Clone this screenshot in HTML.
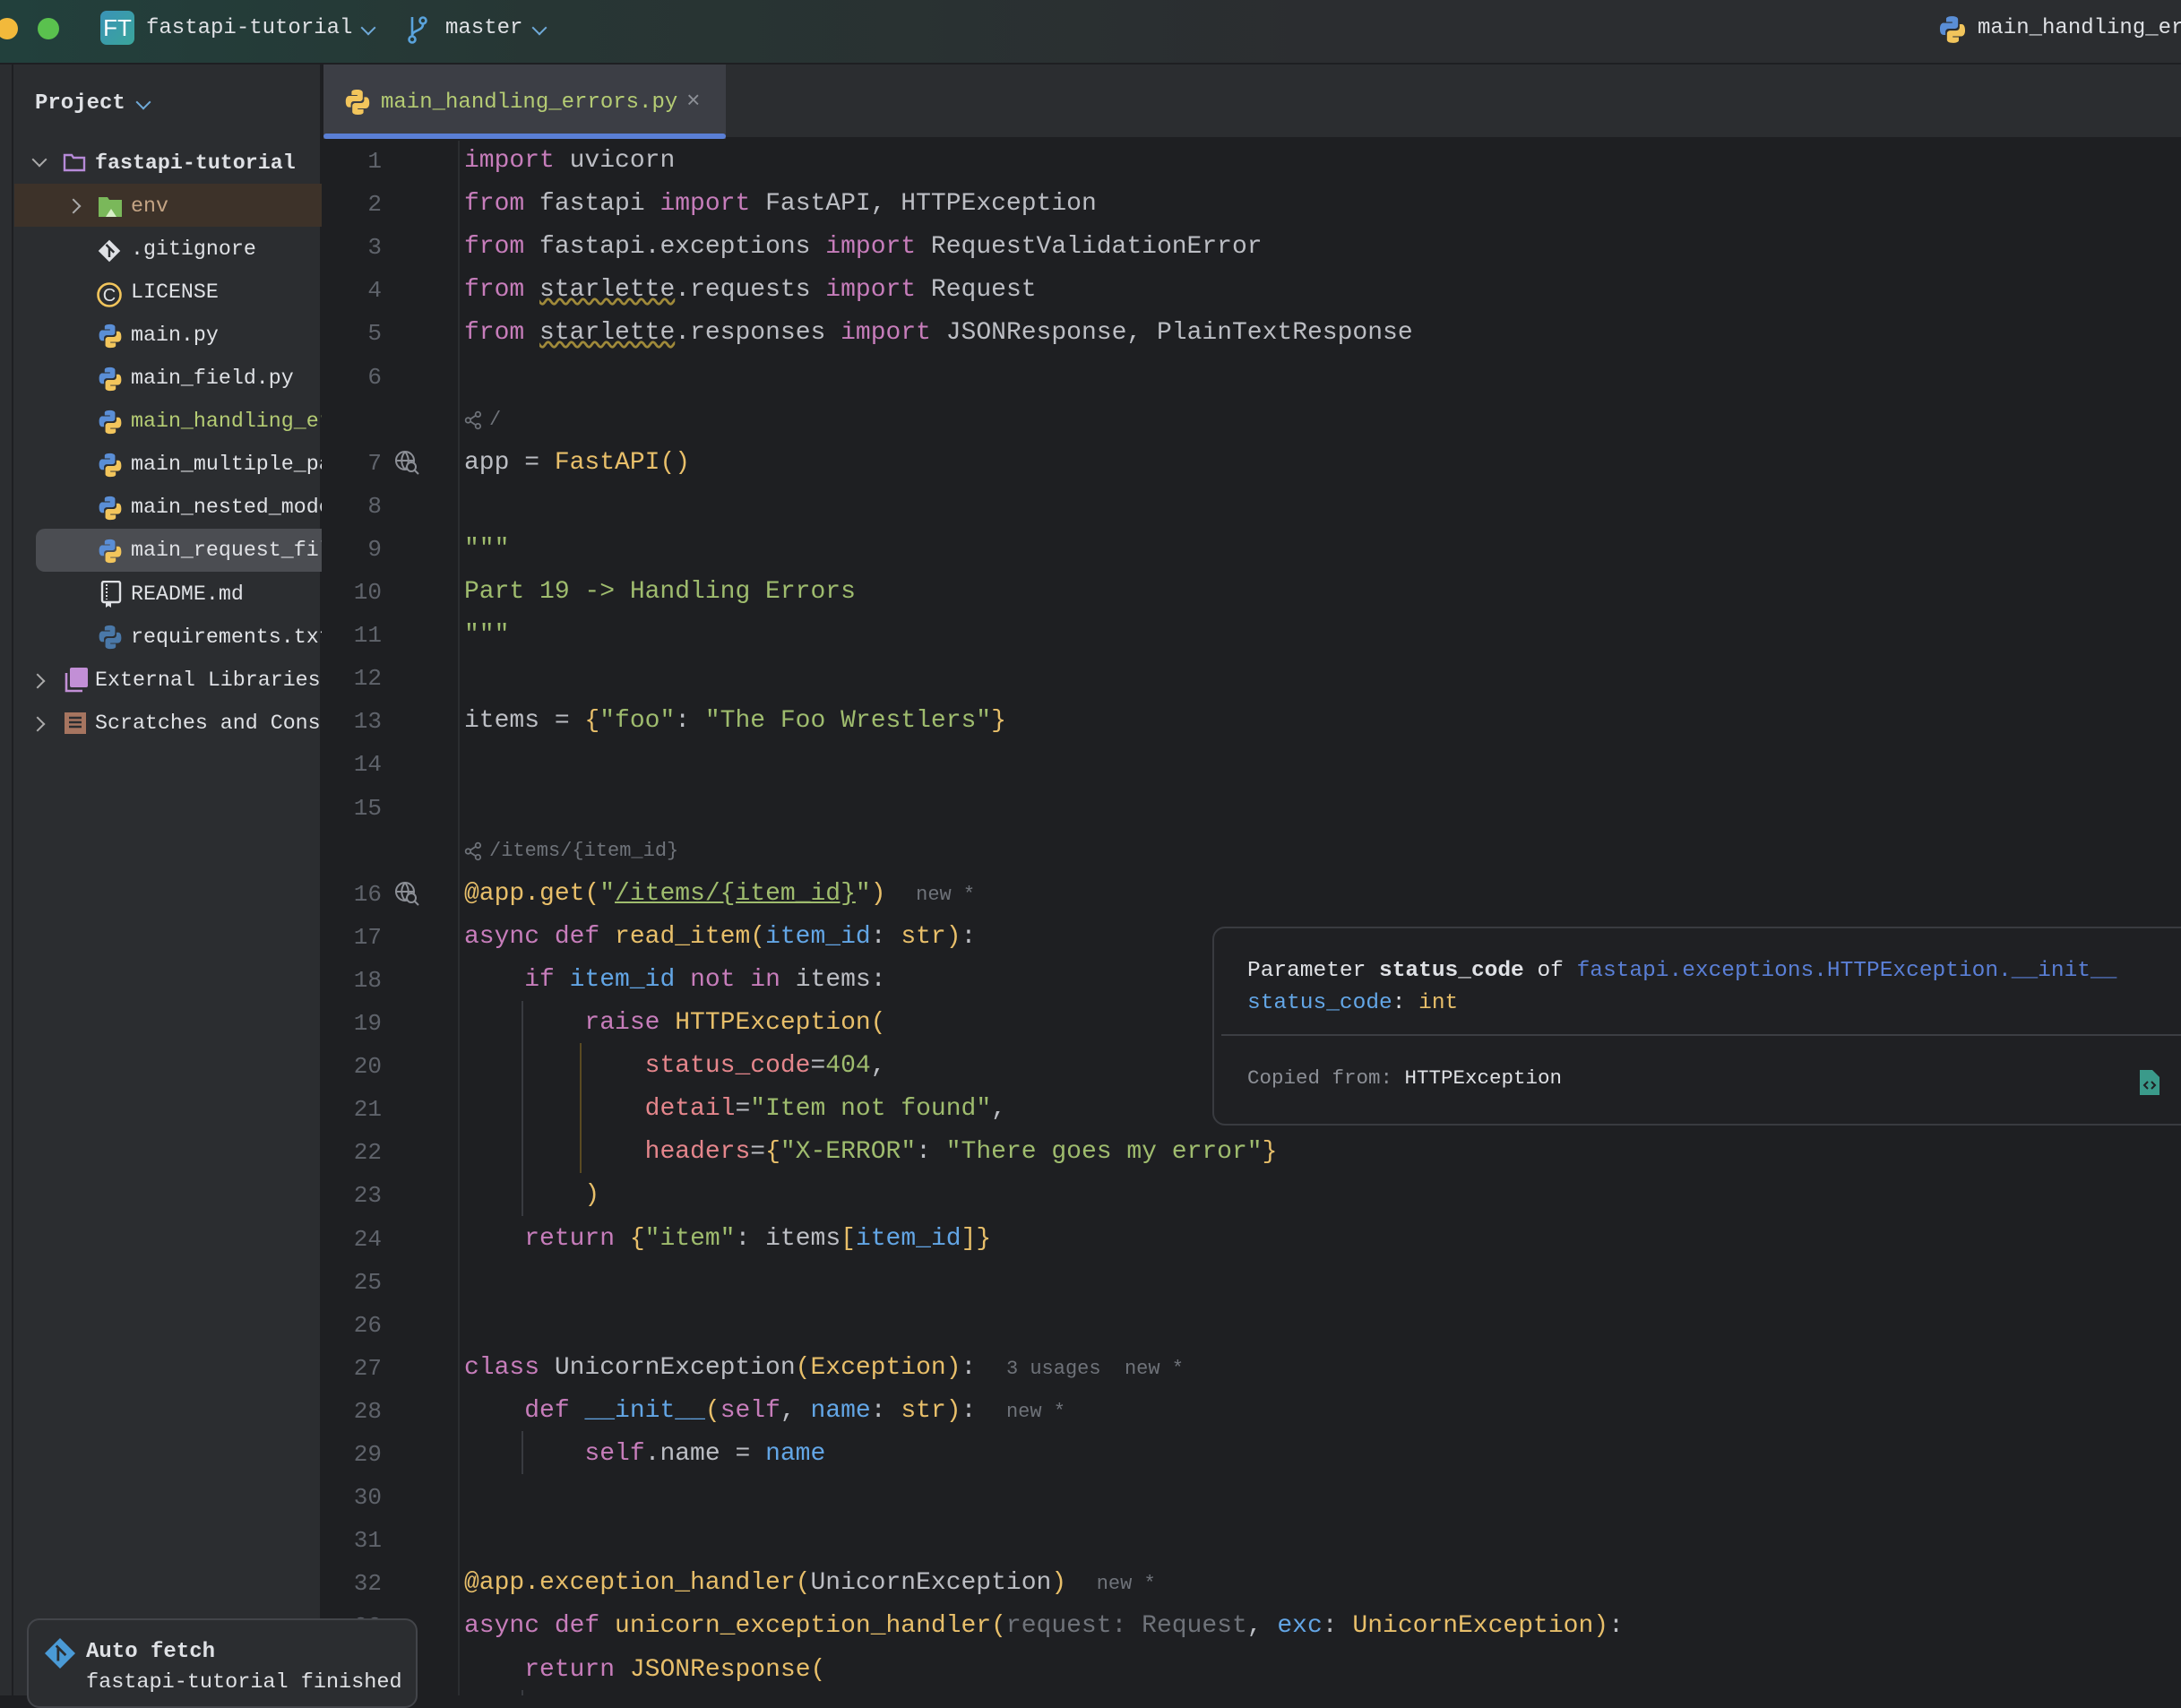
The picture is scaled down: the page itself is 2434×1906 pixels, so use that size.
<!DOCTYPE html>
<html><head><meta charset="utf-8"><style>
*{margin:0;padding:0;box-sizing:border-box}
body{width:2434px;height:1892px;background:#1e1f22;overflow:hidden;position:relative;font-family:"Liberation Mono",monospace;color:#bcbec4}
.abs{position:absolute}
#title{left:0;top:0;width:2434px;height:72px;background:linear-gradient(90deg,#22403c 0%,#273634 25%,#2b2d30 60%);border-bottom:2px solid #1e1f22}
#side{left:0;top:72px;width:359px;height:1820px;background:#2b2d30;border-right:2px solid #1e1f22}
#strip{left:0;top:72px;width:15px;height:1820px;background:#2b2d30;border-right:2px solid #1e1f22}
#tabbar{left:361px;top:72px;width:2073px;height:83px;background:#2b2d30;border-bottom:2px solid #1e1f22}
.row{position:absolute;height:48.1px;line-height:48.1px;white-space:pre}
.code{font-size:28px;left:518px}
.ln{font-size:26px;color:#5f636b;width:70px;text-align:right;left:356px}
.k{color:#c77dbb}.s{color:#9fbc6e}.f{color:#e8bf6a}.p{color:#63a6e6}.n{color:#e5868c}.g{color:#6f737a}.d{color:#bcbec4}
.sb{font-size:23.3px;line-height:48.1px;height:48.1px}
.chev{position:absolute;width:12px;height:12px;border-right:2.6px solid #aaa;border-bottom:2.6px solid #aaa}
</style></head><body>
<div id="title" class="abs">
  <div class="abs" style="left:-4px;top:20px;width:24px;height:24px;border-radius:50%;background:#f2b93b"></div>
  <div class="abs" style="left:42px;top:20px;width:24px;height:24px;border-radius:50%;background:#5ac14e"></div>
  <div class="abs" style="left:112px;top:12px;width:38px;height:38px;border-radius:7px;background:linear-gradient(135deg,#3a93b8,#3aa59a);color:#fff;font:26px 'Liberation Sans',sans-serif;line-height:38px;text-align:center">FT</div>
  <div class="abs" style="left:163px;top:18px;font-size:24px;color:#dfe1e5">fastapi-tutorial</div>
  <div class="chev" style="left:405px;top:25px;transform:rotate(45deg);border-color:#6fa9d8"></div>
  <svg class="abs" style="left:454px;top:16px" width="24" height="34" viewBox="0 0 24 34"><g fill="none" stroke="#5aa3dc" stroke-width="2.6"><circle cx="6" cy="28" r="3.5"/><circle cx="18" cy="7" r="3.5"/><path d="M6 3v21M18 11c0 8-12 6-12 13"/></g></svg>
  <div class="abs" style="left:497px;top:18px;font-size:24px;color:#dfe1e5">master</div>
  <div class="chev" style="left:596px;top:25px;transform:rotate(45deg);border-color:#6fa9d8"></div>
  <svg class="abs" style="left:2162px;top:16px" width="34" height="34" viewBox="0 0 16 16"><path d="M7.8 1C4.5 1 4.7 2.4 4.7 2.4V4h3.2v.5H3.5S1.4 4.3 1.4 7.6s1.8 3.2 1.8 3.2h1.1V9.3s-.1-1.8 1.8-1.8h3.1s1.7 0 1.7-1.7V2.8S11.2 1 7.8 1z" fill="#5a8ed6"/><path d="M8.2 15c3.3 0 3.1-1.4 3.1-1.4V12H8.1v-.5h4.4s2.1.2 2.1-3.1-1.8-3.2-1.8-3.2h-1.1v1.5s.1 1.8-1.8 1.8H6.8s-1.7 0-1.7 1.7v3S4.8 15 8.2 15z" fill="#f2c55c"/></svg>
  <div class="abs" style="left:2207px;top:18px;font-size:24px;color:#dfe1e5">main_handling_er</div>
</div>
<div id="side" class="abs"></div>
<div id="strip" class="abs"></div>
<div class="abs" style="left:39px;top:102px;font-size:24px;font-weight:bold;color:#dfe1e5">Project</div>
<div class="chev" style="left:154px;top:108px;transform:rotate(45deg);border-color:#6fa9d8"></div>
<div class="abs" style="left:16px;top:205px;width:343px;height:48px;background:#3d3229"></div>
<div class="abs" style="left:40px;top:590px;width:319px;height:48px;background:#4b4d52;border-radius:10px 0 0 10px"></div>
<div class="abs" style="left:0;top:157.5px;width:359px;overflow:hidden;height:680px">
 <div class="chev" style="left:38px;top:14px;transform:rotate(45deg)"></div>
 <svg class="abs" style="left:70px;top:12px" width="26" height="22" viewBox="0 0 26 22"><path d="M2 3h8l2 3h12v14H2z" fill="none" stroke="#b68ad8" stroke-width="2.4"/></svg>
 <div class="row sb" style="top:0;left:106px;color:#dfe1e5;font-weight:bold">fastapi-tutorial</div>
 <div class="chev" style="left:76px;top:66px;transform:rotate(-45deg)"></div>
 <svg class="abs" style="left:110px;top:62px" width="26" height="22"><path d="M0 0h10l2 3h14v19H0z" fill="#7ab85a"/><path d="M8 22l6-9 6 9z" fill="#d8efc8"/></svg>
 <div class="row sb" style="top:48.1px;left:146px;color:#c4a484">env</div>
 <svg class="abs" style="left:108px;top:108px" width="28" height="28" viewBox="0 0 16 16"><path d="M8 1l7 7-7 7-7-7z" fill="#dfe1e5"/><path d="M6 4l5 5M8 6v6" stroke="#2b2d30" stroke-width="1.4"/></svg>
 <div class="row sb" style="top:96.2px;left:146px;color:#dfe1e5">.gitignore</div>
 <svg class="abs" style="left:107px;top:156px" width="30" height="30"><circle cx="15" cy="15" r="12.5" fill="none" stroke="#f2c55c" stroke-width="2.6"/><text x="15" y="22" font-size="20" text-anchor="middle" fill="#dfe1e5" font-family="Liberation Sans">C</text></svg>
 <div class="row sb" style="top:144.3px;left:146px;color:#dfe1e5">LICENSE</div>
 <div class="row sb" style="top:192.4px;left:146px;color:#dfe1e5">main.py</div>
 <div class="row sb" style="top:240.5px;left:146px;color:#dfe1e5">main_field.py</div>
 <div class="row sb" style="top:288.6px;left:146px;color:#b5cc74">main_handling_errors.py</div>
 <div class="row sb" style="top:336.7px;left:146px;color:#dfe1e5">main_multiple_params.py</div>
 <div class="row sb" style="top:384.8px;left:146px;color:#dfe1e5">main_nested_models.py</div>
 <div class="row sb" style="top:432.9px;left:146px;color:#dfe1e5">main_request_files.py</div>
 <svg class="abs" style="left:112px;top:490px" width="24" height="30"><rect x="2" y="1" width="20" height="23" rx="2" fill="none" stroke="#dfe1e5" stroke-width="2.4"/><path d="M7 4v17" stroke="#dfe1e5" stroke-dasharray="2 2" stroke-width="2"/><path d="M6 24v6l3-2 3 2v-6" fill="#dfe1e5"/></svg>
 <div class="row sb" style="top:481px;left:146px;color:#dfe1e5">README.md</div>
 <div class="row sb" style="top:529.1px;left:146px;color:#dfe1e5">requirements.txt</div>
 <div class="chev" style="left:36px;top:596px;transform:rotate(-45deg)"></div>
 <svg class="abs" style="left:72px;top:587px" width="26" height="28"><rect x="6" y="0" width="20" height="22" rx="2" fill="#c28fd6"/><path d="M2 6v20h18" fill="none" stroke="#c28fd6" stroke-width="2.6"/></svg>
 <div class="row sb" style="top:577.2px;left:106px;color:#dfe1e5">External Libraries</div>
 <div class="chev" style="left:36px;top:644px;transform:rotate(-45deg)"></div>
 <svg class="abs" style="left:72px;top:636px" width="26" height="26"><rect x="0" y="1" width="24" height="24" fill="#a67560"/><path d="M5 7h14M5 12h14M5 17h14" stroke="#2b2d30" stroke-width="2.4"/></svg>
 <div class="row sb" style="top:625.3px;left:106px;color:#dfe1e5">Scratches and Consoles</div>
</div>
<svg width="0" height="0" style="position:absolute"><defs><g id="py"><path d="M7.8 1C4.5 1 4.7 2.4 4.7 2.4V4h3.2v.5H3.5S1.4 4.3 1.4 7.6s1.8 3.2 1.8 3.2h1.1V9.3s-.1-1.8 1.8-1.8h3.1s1.7 0 1.7-1.7V2.8S11.2 1 7.8 1z" fill="#5a8ed6"/><path d="M8.2 15c3.3 0 3.1-1.4 3.1-1.4V12H8.1v-.5h4.4s2.1.2 2.1-3.1-1.8-3.2-1.8-3.2h-1.1v1.5s.1 1.8-1.8 1.8H6.8s-1.7 0-1.7 1.7v3S4.8 15 8.2 15z" fill="#f2c55c"/></g>
<g id="share" fill="none" stroke="#6f737a" stroke-width="1.6"><circle cx="4" cy="10" r="2.5"/><circle cx="14" cy="4" r="2.5"/><circle cx="14" cy="16" r="2.5"/><path d="M6 9l6-4M6 11l6 4"/></g></defs></svg>
<svg class="abs" style="left:108px;top:360px" width="30" height="30" viewBox="0 0 16 16"><use href="#py"/></svg>
<svg class="abs" style="left:108px;top:408px" width="30" height="30" viewBox="0 0 16 16"><use href="#py"/></svg>
<svg class="abs" style="left:108px;top:456px" width="30" height="30" viewBox="0 0 16 16"><use href="#py"/></svg>
<svg class="abs" style="left:108px;top:504px" width="30" height="30" viewBox="0 0 16 16"><use href="#py"/></svg>
<svg class="abs" style="left:108px;top:552px" width="30" height="30" viewBox="0 0 16 16"><use href="#py"/></svg>
<svg class="abs" style="left:108px;top:600px" width="30" height="30" viewBox="0 0 16 16"><use href="#py"/></svg>
<svg class="abs" style="left:108px;top:696px" width="30" height="30" viewBox="0 0 16 16"><path d="M7.8 1C4.5 1 4.7 2.4 4.7 2.4V4h3.2v.5H3.5S1.4 4.3 1.4 7.6s1.8 3.2 1.8 3.2h1.1V9.3s-.1-1.8 1.8-1.8h3.1s1.7 0 1.7-1.7V2.8S11.2 1 7.8 1zM8.2 15c3.3 0 3.1-1.4 3.1-1.4V12H8.1v-.5h4.4s2.1.2 2.1-3.1-1.8-3.2-1.8-3.2h-1.1v1.5s.1 1.8-1.8 1.8H6.8s-1.7 0-1.7 1.7v3S4.8 15 8.2 15z" fill="#4a78a8"/></svg>

<div id="tabbar" class="abs"></div>
<div class="abs" style="left:361px;top:72px;width:449px;height:83px;background:#3c3e45"></div>
<div class="abs" style="left:361px;top:149px;width:449px;height:6px;background:#5a7fd6;border-radius:3px"></div>
<svg class="abs" style="left:383px;top:98px" width="32" height="32" viewBox="0 0 16 16"><path d="M7.8 1C4.5 1 4.7 2.4 4.7 2.4V4h3.2v.5H3.5S1.4 4.3 1.4 7.6s1.8 3.2 1.8 3.2h1.1V9.3s-.1-1.8 1.8-1.8h3.1s1.7 0 1.7-1.7V2.8S11.2 1 7.8 1zM8.2 15c3.3 0 3.1-1.4 3.1-1.4V12H8.1v-.5h4.4s2.1.2 2.1-3.1-1.8-3.2-1.8-3.2h-1.1v1.5s.1 1.8-1.8 1.8H6.8s-1.7 0-1.7 1.7v3S4.8 15 8.2 15z" fill="#f2c55c"/></svg>
<div class="abs" style="left:425px;top:101px;font-size:24px;color:#b5cc74">main_handling_errors.py</div>
<div class="abs" style="left:766px;top:98px;font-size:26px;color:#8c8f96">×</div>

<div class="abs" style="left:511px;top:157px;width:2px;height:1735px;background:#2b2d30"></div>
<div class="abs" style="left:582px;top:1117px;width:2px;height:240px;background:#393b40"></div>
<div class="abs" style="left:647px;top:1164px;width:2px;height:145px;background:#5a4a22"></div>
<div class="abs" style="left:582px;top:1597px;width:2px;height:48px;background:#393b40"></div>
<div class="abs" style="left:582px;top:1886px;width:2px;height:6px;background:#393b40"></div>

<div class="abs" style="left:0;top:156px;width:2434px;height:1736px">
<div class="row ln" style="top:0">1</div><div class="row code" style="top:0"><span class="k">import</span> uvicorn</div>
<div class="row ln" style="top:48.1px">2</div><div class="row code" style="top:48.1px"><span class="k">from</span> fastapi <span class="k">import</span> FastAPI, HTTPException</div>
<div class="row ln" style="top:96.2px">3</div><div class="row code" style="top:96.2px"><span class="k">from</span> fastapi.exceptions <span class="k">import</span> RequestValidationError</div>
<div class="row ln" style="top:144.3px">4</div><div class="row code" style="top:144.3px"><span class="k">from</span> <span style="text-decoration:underline wavy #a08a3a">starlette</span>.requests <span class="k">import</span> Request</div>
<div class="row ln" style="top:192.4px">5</div><div class="row code" style="top:192.4px"><span class="k">from</span> <span style="text-decoration:underline wavy #a08a3a">starlette</span>.responses <span class="k">import</span> JSONResponse, PlainTextResponse</div>
<div class="row ln" style="top:240.5px">6</div>
<svg class="abs" style="left:518px;top:302px" width="22" height="22" viewBox="0 0 20 20"><use href="#share"/></svg>
<div class="row code g" style="top:288.6px;left:546px;font-size:22px">/</div>
<div class="row ln" style="top:336.7px">7</div><div class="row code" style="top:336.7px">app = <span class="f">FastAPI()</span></div>
<div class="row ln" style="top:384.8px">8</div>
<div class="row ln" style="top:432.9px">9</div><div class="row code s" style="top:432.9px">"""</div>
<div class="row ln" style="top:481px">10</div><div class="row code s" style="top:481px">Part 19 -&gt; Handling Errors</div>
<div class="row ln" style="top:529.1px">11</div><div class="row code s" style="top:529.1px">"""</div>
<div class="row ln" style="top:577.2px">12</div>
<div class="row ln" style="top:625.3px">13</div><div class="row code" style="top:625.3px">items = <span class="f">{</span><span class="s">"foo"</span>: <span class="s">"The Foo Wrestlers"</span><span class="f">}</span></div>
<div class="row ln" style="top:673.4px">14</div>
<div class="row ln" style="top:721.5px">15</div>
<svg class="abs" style="left:518px;top:783px" width="22" height="22" viewBox="0 0 20 20"><use href="#share"/></svg>
<div class="row code g" style="top:769.6px;left:546px;font-size:22px">/items/{item_id}</div>
<div class="row ln" style="top:817.7px">16</div><div class="row code" style="top:817.7px"><span class="f">@app.get(</span><span class="s">"<u>/items/{item_id}</u>"</span><span class="f">)</span>  <span class="g" style="font-size:22px">new *</span></div>
<div class="row ln" style="top:865.8px">17</div><div class="row code" style="top:865.8px"><span class="k">async def</span> <span class="f">read_item(</span><span class="p">item_id</span>: <span class="f">str)</span>:</div>
<div class="row ln" style="top:913.9px">18</div><div class="row code" style="top:913.9px">    <span class="k">if</span> <span class="p">item_id</span> <span class="k">not in</span> items:</div>
<div class="row ln" style="top:962px">19</div><div class="row code" style="top:962px">        <span class="k">raise</span> <span class="f">HTTPException(</span></div>
<div class="row ln" style="top:1010.1px">20</div><div class="row code" style="top:1010.1px">            <span class="n">status_code</span>=<span class="s">404</span>,</div>
<div class="row ln" style="top:1058.2px">21</div><div class="row code" style="top:1058.2px">            <span class="n">detail</span>=<span class="s">"Item not found"</span>,</div>
<div class="row ln" style="top:1106.3px">22</div><div class="row code" style="top:1106.3px">            <span class="n">headers</span>=<span class="f">{</span><span class="s">"X-ERROR"</span>: <span class="s">"There goes my error"</span><span class="f">}</span></div>
<div class="row ln" style="top:1154.4px">23</div><div class="row code" style="top:1154.4px">        <span class="f">)</span></div>
<div class="row ln" style="top:1202.5px">24</div><div class="row code" style="top:1202.5px">    <span class="k">return</span> <span class="f">{</span><span class="s">"item"</span>: items<span class="f">[</span><span class="p">item_id</span><span class="f">]}</span></div>
<div class="row ln" style="top:1250.6px">25</div>
<div class="row ln" style="top:1298.7px">26</div>
<div class="row ln" style="top:1346.8px">27</div><div class="row code" style="top:1346.8px"><span class="k">class</span> UnicornException<span class="f">(Exception)</span>:  <span class="g" style="font-size:22px">3 usages  new *</span></div>
<div class="row ln" style="top:1394.9px">28</div><div class="row code" style="top:1394.9px">    <span class="k">def</span> <span class="p">__init__</span><span class="f">(</span><span class="k">self</span>, <span class="p">name</span>: <span class="f">str)</span>:  <span class="g" style="font-size:22px">new *</span></div>
<div class="row ln" style="top:1443px">29</div><div class="row code" style="top:1443px">        <span class="k">self</span>.name = <span class="p">name</span></div>
<div class="row ln" style="top:1491.1px">30</div>
<div class="row ln" style="top:1539.2px">31</div>
<div class="row ln" style="top:1587.3px">32</div><div class="row code" style="top:1587.3px"><span class="f">@app.exception_handler(</span>UnicornException<span class="f">)</span>  <span class="g" style="font-size:22px">new *</span></div>
<div class="row ln" style="top:1635.4px">33</div><div class="row code" style="top:1635.4px"><span class="k">async def</span> <span class="f">unicorn_exception_handler(</span><span class="g">request: Request</span>, <span class="p">exc</span>: <span class="f">UnicornException)</span>:</div>
<div class="row ln" style="top:1683.5px">34</div><div class="row code" style="top:1683.5px">    <span class="k">return</span> <span class="f">JSONResponse(</span></div>
</div>
<svg class="abs" style="left:440px;top:502px" width="28" height="28" viewBox="0 0 28 28"><g fill="none" stroke="#8c8f96" stroke-width="2"><circle cx="12" cy="12" r="10"/><path d="M2 12h20M12 2c-5 6-5 14 0 20M12 2c5 6 5 14 0 20"/><circle cx="19" cy="19" r="5" fill="#1e1f22"/><path d="M23 23l4 4"/></g></svg>
<svg class="abs" style="left:440px;top:983px" width="28" height="28" viewBox="0 0 28 28"><g fill="none" stroke="#8c8f96" stroke-width="2"><circle cx="12" cy="12" r="10"/><path d="M2 12h20M12 2c-5 6-5 14 0 20M12 2c5 6 5 14 0 20"/><circle cx="19" cy="19" r="5" fill="#1e1f22"/><path d="M23 23l4 4"/></g></svg>

<div class="abs" style="left:1353px;top:1034px;width:1100px;height:222px;background:#1f2023;border:2px solid #393b40;border-radius:14px"></div>
<div class="abs" style="left:1392px;top:1066px;font-size:24.5px;line-height:36px;white-space:pre;color:#dfe1e5">Parameter <b>status_code</b> of <span style="color:#5a7fd6">fastapi.exceptions.HTTPException.__init__</span>
<span class="p">status_code</span>: <span class="f">int</span></div>
<div class="abs" style="left:1363px;top:1154px;width:1071px;height:2px;background:#3c3e43"></div>
<div class="abs" style="left:1392px;top:1190px;font-size:22.5px;white-space:pre;color:#8c8f96">Copied from: <span style="color:#dfe1e5">HTTPException</span></div>
<svg class="abs" style="left:2388px;top:1194px" width="22" height="28"><path d="M0 0h14l8 8v20H0z" fill="#3a9a8a"/><path d="M9 13l-4 4 4 4M13 13l4 4-4 4" stroke="#1f2023" stroke-width="2" fill="none"/></svg>

<div class="abs" style="left:30px;top:1806px;width:436px;height:100px;background:#2b2d30;border:2px solid #43454a;border-radius:14px"></div>
<svg class="abs" style="left:50px;top:1828px" width="34" height="34" viewBox="0 0 16 16"><path d="M8 0l8 8-8 8-8-8z" fill="#4a9ad6"/><path d="M6 4l5 5M7 5v7" stroke="#2b2d30" stroke-width="1.3"/></svg>
<div class="abs" style="left:96px;top:1830px;font-size:24px;font-weight:bold;color:#dfe1e5">Auto fetch</div>
<div class="abs" style="left:96px;top:1864px;font-size:23.5px;color:#dfe1e5">fastapi-tutorial finished</div>
</body></html>
